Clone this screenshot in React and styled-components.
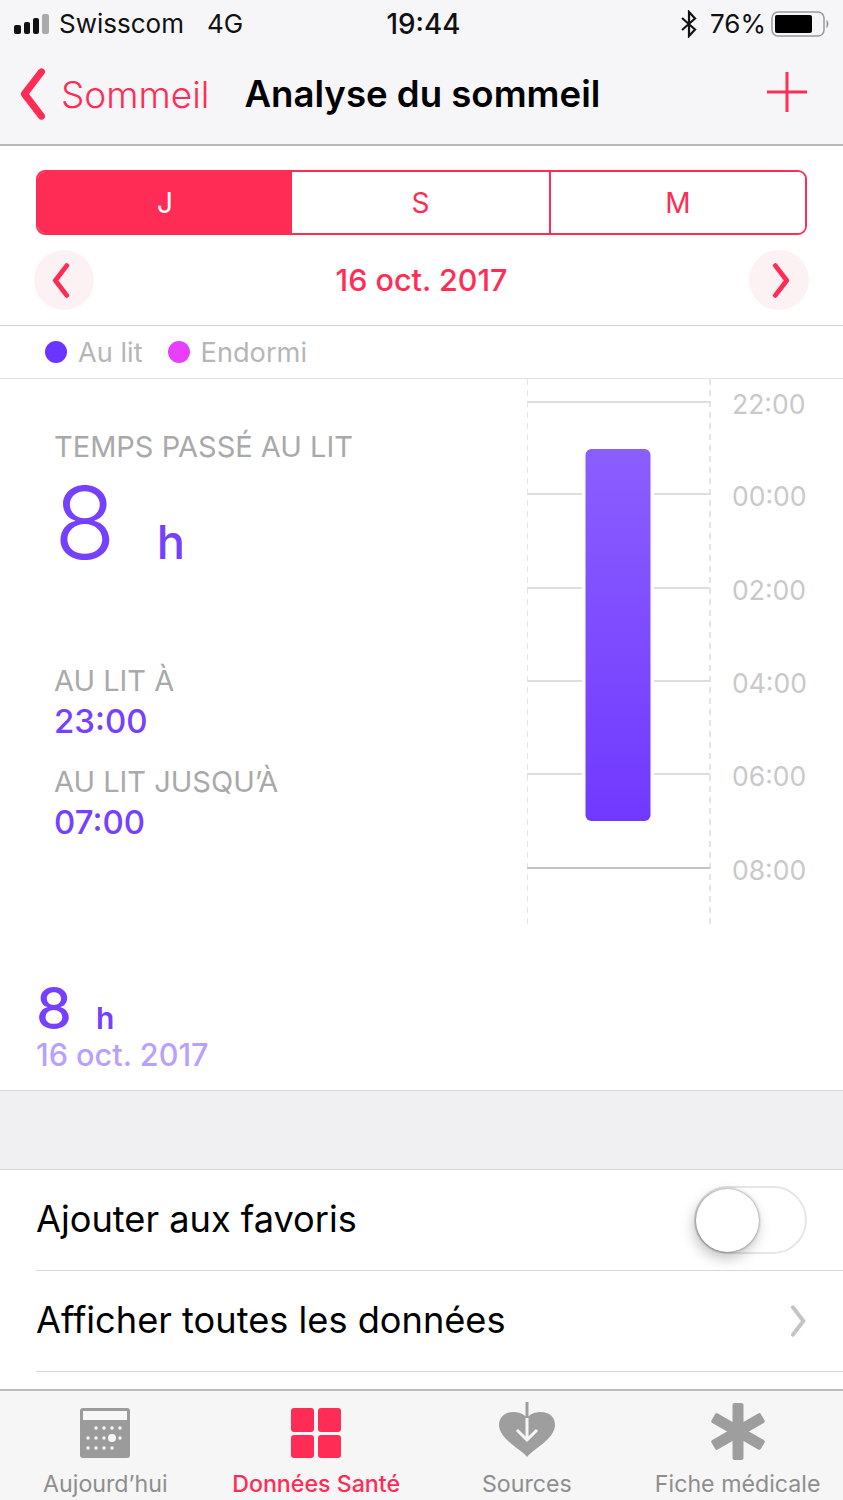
import React from "react";
import styled, { createGlobalStyle } from "styled-components";

const PINK = "#ff2d55";
const PURPLE = "#7540ff";

const GlobalStyle = createGlobalStyle`
  html, body {
    margin: 0;
    background: #fff;
  }
  body {
    font-family: "Inter", "Liberation Sans", sans-serif;
    -webkit-font-smoothing: antialiased;
  }
`;

const Page = styled.div`
  width: 843px;
  height: 1500px;
  display: flex;
  flex-direction: column;
  overflow: hidden;
`;

const Header = styled.header`
  height: 144px;
  background: #f6f6f8;
  border-bottom: 2px solid #b9b9bb;
  flex: none;
`;

const StatusBar = styled.div`
  height: 47px;
  padding: 0 13px 0 14px;
  display: grid;
  grid-template-columns: 1fr auto 1fr;
  align-items: center;
  font-size: 26px;
  color: #111;
`;

const StatusLeft = styled.div`
  display: flex;
  align-items: center;
`;

const Carrier = styled.span`
  margin-left: 7px;
`;

const Network = styled.span`
  margin-left: 23px;
`;

const Clock = styled.div`
  margin-left: 3px;
  font-size: 27.8px;
  font-weight: 500;
`;

const StatusRight = styled.div`
  display: flex;
  justify-content: flex-end;
  align-items: center;
`;

const Percent = styled.span`
  margin-left: 13px;
  margin-right: 5px;
`;

const NavBar = styled.div`
  height: 97px;
  padding: 0 36px 3px 18px;
  box-sizing: border-box;
  display: flex;
  align-items: center;
`;

const BackLabel = styled.span`
  margin-left: 13px;
  color: ${PINK};
  font-size: 37px;
  font-weight: 300;
`;

const NavTitle = styled.h1`
  margin: 0 0 0 35px;
  flex: 1;
  font-size: 36.6px;
  font-weight: 600;
  color: #000;
`;

const PlusWrap = styled.div`
  display: flex;
  margin-bottom: 4px;
`;

const Controls = styled.section`
  height: 180px;
  padding-top: 24px;
  box-sizing: border-box;
  border-bottom: 1px solid #cfcfcf;
  flex: none;
`;

const Segments = styled.div`
  margin: 0 36px;
  height: 65px;
  box-sizing: border-box;
  display: grid;
  grid-template-columns: 254px 257px 1fr;
  border: 2px solid ${PINK};
  border-radius: 9px;
  overflow: hidden;
`;

const Segment = styled.div`
  display: flex;
  align-items: center;
  justify-content: center;
  font-size: 28px;
  color: ${(p) => (p.$active ? "#fff" : PINK)};
  background: ${(p) => (p.$active ? PINK : "#fff")};
  border-left: ${(p) => (p.$divider ? `2px solid ${PINK}` : "none")};
`;

const DateRow = styled.div`
  margin: 15px 34px 0;
  display: flex;
  align-items: center;
  justify-content: space-between;
`;

const RoundButton = styled.div`
  width: 60px;
  height: 60px;
  box-sizing: border-box;
  border-radius: 50%;
  background: #fdf2f3;
  display: flex;
  align-items: center;
  justify-content: center;
  padding-left: ${(p) => (p.$right ? 4 : 0)}px;
  padding-right: ${(p) => (p.$right ? 0 : 6)}px;
`;

const DateLabel = styled.div`
  margin-bottom: 2px;
  font-size: 30.5px;
  font-weight: 500;
  color: ${PINK};
`;

const Legend = styled.div`
  height: 52px;
  padding-left: 45px;
  display: flex;
  align-items: center;
  border-bottom: 1px solid #e2e2e2;
  flex: none;
  font-size: 27.2px;
  color: #b6b6b6;
`;

const LegendDot = styled.span`
  width: 22px;
  height: 22px;
  border-radius: 50%;
  background: ${(p) => p.$color};
  margin-right: 11px;
`;

const LegendLabel = styled.span`
  margin-right: 25px;
`;

const Overview = styled.section`
  height: 546px;
  display: flex;
  flex: none;
`;

const Stats = styled.div`
  width: 527px;
  padding: 51px 0 0 54px;
  box-sizing: border-box;
`;

const Caption = styled.div`
  font-size: 29px;
  line-height: 34px;
  color: #a9a9a9;
  margin-top: ${(p) => p.$top || 0}px;
`;

const BigValue = styled.div`
  display: flex;
  align-items: baseline;
  height: 120px;
  color: ${PURPLE};
`;

const BigNumber = styled.span`
  font-size: 101px;
  line-height: 116px;
  font-weight: 300;
`;

const BigUnit = styled.span`
  margin-left: 41px;
  font-size: 47px;
  font-weight: 500;
`;

const TimeValue = styled.div`
  font-size: 33px;
  line-height: 46px;
  font-weight: 500;
  color: ${PURPLE};
`;

const Summary = styled.section`
  height: 166px;
  box-sizing: border-box;
  padding: 57px 0 0 36px;
  border-bottom: 1px solid #d6d6d6;
  flex: none;
`;

const SummaryValue = styled.div`
  display: flex;
  align-items: baseline;
  height: 54px;
  color: ${PURPLE};
  font-weight: 500;
`;

const SummaryNumber = styled.span`
  font-size: 57px;
  line-height: 54px;
`;

const SummaryUnit = styled.span`
  margin-left: 24px;
  font-size: 30px;
  font-weight: 600;
`;

const SummaryDate = styled.div`
  margin-top: 1px;
  font-size: 30.6px;
  line-height: 36px;
  font-weight: 500;
  color: #b99fff;
`;

const Gap = styled.div`
  height: 78px;
  background: #f0f0f3;
  border-bottom: 1px solid #d6d6d6;
  flex: none;
`;

const List = styled.section`
  flex: 1;
  padding-left: 36px;
  background: #fff;
`;

const ListRow = styled.div`
  height: 100px;
  padding-right: 36px;
  display: flex;
  align-items: center;
  justify-content: space-between;
  border-bottom: 1px solid #d9d9d9;
  font-size: 36.2px;
  color: #000;
`;

const RowLabel = styled.span`
  margin-bottom: 3px;
`;

const Toggle = styled.div`
  width: 113px;
  height: 68px;
  box-sizing: border-box;
  border: 2px solid #e6e6e6;
  border-radius: 34px;
  position: relative;
`;

const Knob = styled.div`
  position: absolute;
  left: 0;
  top: 1px;
  width: 63px;
  height: 63px;
  border-radius: 50%;
  background: #fff;
  box-shadow: -2px 6px 14px rgba(0, 0, 0, 0.25), 0 0 3px rgba(0, 0, 0, 0.5);
`;

const TabBar = styled.nav`
  height: 109px;
  background: #f6f6f6;
  border-top: 2px solid #bdbdbd;
  display: grid;
  grid-template-columns: repeat(4, 1fr);
  flex: none;
`;

const Tab = styled.div`
  display: flex;
  flex-direction: column;
  align-items: center;
  color: ${(p) => (p.$active ? PINK : "#8e8e8e")};
  font-size: 23.2px;
  font-weight: ${(p) => (p.$active ? 500 : 400)};
`;

const TabIcon = styled.div`
  height: 67px;
  display: flex;
  align-items: flex-end;
`;

const TabLabel = styled.span`
  margin-top: 12px;
  line-height: 28px;
  white-space: nowrap;
`;

const MedicalWrap = styled.div`
  display: flex;
  margin-bottom: -2px;
`;

function Signal() {
  return (
    <svg width="38" height="22" viewBox="0 0 38 22">
      <rect x="0" y="12" width="7" height="9" rx="2" fill="#111" />
      <rect x="10" y="9" width="6" height="12" rx="2" fill="#111" />
      <rect x="19" y="5" width="6" height="16" rx="2" fill="#111" />
      <rect x="28" y="1" width="7" height="20" rx="2" fill="#aaa" />
    </svg>
  );
}

function Bluetooth() {
  return (
    <svg width="16" height="28" viewBox="0 0 16 28">
      <path d="M1 8 L14 19.5 L8 26 L8 2 L14 8.5 L1 20" fill="none" stroke="#111" strokeWidth="2.2" />
    </svg>
  );
}

function Battery() {
  return (
    <svg width="59" height="26" viewBox="0 0 59 26">
      <rect x="1" y="1" width="52" height="24" rx="6" fill="none" stroke="#9a9a9a" strokeWidth="1.5" />
      <rect x="4" y="4" width="37" height="18" rx="2" fill="#000" />
      <path d="M55.5 9 C58 10 58 16 55.5 17 Z" fill="#9a9a9a" />
    </svg>
  );
}

function Chevron({ dir = "left", size = 28, color = PINK, stroke = 5 }) {
  const d = dir === "left" ? "M18 3 L5 20 L18 37" : "M5 3 L18 20 L5 37";
  return (
    <svg width={(size * 23) / 40} height={size} viewBox="0 0 23 40">
      <path d={d} fill="none" stroke={color} strokeWidth={stroke} strokeLinecap="round" strokeLinejoin="round" />
    </svg>
  );
}

function Plus() {
  return (
    <svg width="40" height="40" viewBox="0 0 40 40">
      <path d="M20 0 V40 M0 20 H40" stroke={PINK} strokeWidth="3" />
    </svg>
  );
}

const hours = ["22:00", "00:00", "02:00", "04:00", "06:00", "08:00"];
const ticks = [23, 115, 209, 302, 395, 489];

// the sleep chart, x runs from 527 on the page
function SleepChart() {
  return (
    <svg width="316" height="546" viewBox="0 0 316 546" fontFamily="Inter, sans-serif">
      <defs>
        <linearGradient id="bed" x1="0" y1="0" x2="0" y2="1">
          <stop offset="0" stopColor="#8b5eff" />
          <stop offset="1" stopColor="#7139ff" />
        </linearGradient>
      </defs>
      <path d="M0 0 V546 M183 0 V546" stroke="#dcdcdc" strokeWidth="1.5" strokeDasharray="6 5" />
      {ticks.map((y, i) => (
        <g key={hours[i]}>
          <line x1="0" x2="183" y1={y} y2={y} stroke={i === 5 ? "#c4c4c4" : "#dedede"} strokeWidth="2" />
          <text x="205" y={y + 12} fontSize="26.5" fill="#c9c9c9">
            {hours[i]}
          </text>
        </g>
      ))}
      <rect x="55" y="68" width="72" height="376" fill="#fff" />
      <rect x="58.5" y="70" width="65" height="372" rx="6" fill="url(#bed)" />
    </svg>
  );
}

const calendarDots = [
  [16, 20], [24, 20], [32, 20], [40, 20],
  [8, 30], [16, 30], [24, 30], [40, 30],
  [8, 40], [16, 40], [24, 40], [32, 40],
];

function CalendarIcon() {
  return (
    <svg width="50" height="50" viewBox="0 0 50 50">
      <rect x="0" y="0" width="50" height="50" rx="3" fill="#9b9b9b" />
      <rect x="3" y="3" width="44" height="9" fill="#f6f6f6" />
      {calendarDots.map(([cx, cy]) => (
        <circle key={`${cx}-${cy}`} cx={cx} cy={cy} r="1.7" fill="#f6f6f6" />
      ))}
      <circle cx="32" cy="30" r="4" fill="#f6f6f6" />
    </svg>
  );
}

function GridIcon() {
  return (
    <svg width="50" height="50" viewBox="0 0 50 50">
      <rect x="0" y="0" width="23" height="24" rx="3" fill={PINK} />
      <rect x="27" y="0" width="23" height="24" rx="3" fill={PINK} />
      <rect x="0" y="27" width="23" height="23" rx="3" fill={PINK} />
      <rect x="27" y="27" width="23" height="23" rx="3" fill={PINK} />
    </svg>
  );
}

function SourcesIcon() {
  return (
    <svg width="58" height="56" viewBox="0 0 58 56">
      <path
        d="M29 55 C24 48 1 37 1 23 C1 15 7 10 15 10 C21 10 26 12 29 16 C32 12 37 10 43 10 C51 10 57 15 57 23 C57 37 34 48 29 55 Z"
        fill="#9e9e9e"
      />
      <path d="M29 16 V38 M19 28 L29 38 L39 28" fill="none" stroke="#f6f6f6" strokeWidth="3" />
      <path d="M29 0 V16" stroke="#9e9e9e" strokeWidth="3" />
    </svg>
  );
}

function MedicalIcon() {
  return (
    <MedicalWrap>
      <svg width="54" height="57" viewBox="0 0 54 57">
        <g fill="#9e9e9e">
          <rect x="21.5" y="0" width="11" height="57" rx="2" />
          <rect x="21.5" y="0" width="11" height="57" rx="2" transform="rotate(60 27 28.5)" />
          <rect x="21.5" y="0" width="11" height="57" rx="2" transform="rotate(120 27 28.5)" />
        </g>
      </svg>
    </MedicalWrap>
  );
}

function App() {
  return (
    <Page>
      <GlobalStyle />
      <Header>
        <StatusBar>
          <StatusLeft>
            <Signal />
            <Carrier>Swisscom</Carrier>
            <Network>4G</Network>
          </StatusLeft>
          <Clock>19:44</Clock>
          <StatusRight>
            <Bluetooth />
            <Percent>76%</Percent>
            <Battery />
          </StatusRight>
        </StatusBar>
        <NavBar>
          <Chevron size={52} stroke={5.5} />
          <BackLabel>Sommeil</BackLabel>
          <NavTitle>Analyse du sommeil</NavTitle>
          <PlusWrap>
            <Plus />
          </PlusWrap>
        </NavBar>
      </Header>

      <Controls>
        <Segments>
          <Segment $active>J</Segment>
          <Segment>S</Segment>
          <Segment $divider>M</Segment>
        </Segments>
        <DateRow>
          <RoundButton>
            <Chevron size={35} stroke={5.5} />
          </RoundButton>
          <DateLabel>16 oct. 2017</DateLabel>
          <RoundButton $right>
            <Chevron dir="right" size={35} stroke={5.5} />
          </RoundButton>
        </DateRow>
      </Controls>

      <Legend>
        <LegendDot $color="#6a35ff" />
        <LegendLabel>Au lit</LegendLabel>
        <LegendDot $color="#e83fff" />
        <LegendLabel>Endormi</LegendLabel>
      </Legend>

      <Overview>
        <Stats>
          <Caption>TEMPS PASSÉ AU LIT</Caption>
          <BigValue>
            <BigNumber>8</BigNumber>
            <BigUnit>h</BigUnit>
          </BigValue>
          <Caption $top={80}>AU LIT À</Caption>
          <TimeValue>23:00</TimeValue>
          <Caption $top={21}>AU LIT JUSQU’À</Caption>
          <TimeValue>07:00</TimeValue>
        </Stats>
        <SleepChart />
      </Overview>

      <Summary>
        <SummaryValue>
          <SummaryNumber>8</SummaryNumber>
          <SummaryUnit>h</SummaryUnit>
        </SummaryValue>
        <SummaryDate>16 oct. 2017</SummaryDate>
      </Summary>

      <Gap />

      <List>
        <ListRow>
          <RowLabel>Ajouter aux favoris</RowLabel>
          <Toggle>
            <Knob />
          </Toggle>
        </ListRow>
        <ListRow>
          <RowLabel>Afficher toutes les données</RowLabel>
          <Chevron dir="right" size={32} color="#c4c4c8" stroke={5} />
        </ListRow>
      </List>

      <TabBar>
        <Tab>
          <TabIcon>
            <CalendarIcon />
          </TabIcon>
          <TabLabel>Aujourd’hui</TabLabel>
        </Tab>
        <Tab $active>
          <TabIcon>
            <GridIcon />
          </TabIcon>
          <TabLabel>Données Santé</TabLabel>
        </Tab>
        <Tab>
          <TabIcon>
            <SourcesIcon />
          </TabIcon>
          <TabLabel>Sources</TabLabel>
        </Tab>
        <Tab>
          <TabIcon>
            <MedicalIcon />
          </TabIcon>
          <TabLabel>Fiche médicale</TabLabel>
        </Tab>
      </TabBar>
    </Page>
  );
}

export default App;
